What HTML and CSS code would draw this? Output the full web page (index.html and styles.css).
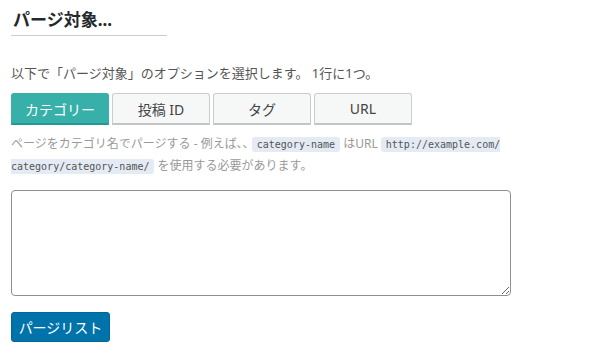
FILE: index.html
```html
<!DOCTYPE html>
<html lang="ja">
<head>
    <meta charset="UTF-8">
    <title>パージ対象</title>
    <link rel="stylesheet" href="styles.css">
</head>
<body>
    <div class="panel">
        <h2 class="title">パージ対象...</h2>

        <p class="intro">以下で「パージ対象」のオプションを選択します。 1行に1つ。</p>

        <!-- tabs -->
        <div class="tabs">
            <button class="tab active">カテゴリー</button>
            <button class="tab">投稿 ID</button>
            <button class="tab">タグ</button>
            <button class="tab">URL</button>
        </div>

        <p class="help">ページをカテゴリ名でパージする - 例えば､､ <code>category-name</code> はURL <code>http://example.com/<wbr>category/category-name/</code> を使用する必要があります。</p>

        <textarea class="list"></textarea>

        <button class="submit">パージリスト</button>
    </div>
</body>
</html>
```

FILE: styles.css
```css
body {
    margin: 0;
    font-family: "Noto Sans", "Noto Sans CJK JP", sans-serif;
    color: #333;
    background: #fff;
}
.panel {
    padding: 8px 11px;
    width: 500px;
}
.title {
    display: inline-block;
    margin: 0;
    padding: 0 12px 3px 2px;
    font-size: 17px;
    line-height: 24px;
    font-weight: bold;
    color: #23282d;
    border-bottom: 1px solid #ccc;
    width: 142px;
}
.intro {
    margin: 27px 0 10px;
    font-size: 13px;
    line-height: 20px;
    color: #555;
}
.tabs {
    display: flex;
    gap: 3px;
}
.tab {
    width: 98px;
    height: 32px;
    padding: 0;
    font-family: inherit;
    font-size: 14px;
    color: #444;
    background: #f6f7f7;
    border: 1px solid #ccc;
    border-bottom: 2px solid #c3c4c7;
    border-radius: 3px 3px 0 0;
}
.tab.active {
    background: #36b0a8;
    color: #fff;
    border-color: #36b0a8;
    border-bottom-color: #229a91;
}
.help {
    margin: 8px 0 13px;
    font-size: 12px;
    line-height: 21px;
    color: #999;
}
.help code {
    font-family: "DejaVu Sans Mono", monospace;
    font-size: 10px;
    color: #555;
    background: #e4ebf4;
    padding: 2px 5px;
    border-radius: 3px;
}
.list {
    display: block;
    box-sizing: border-box;
    width: 500px;
    height: 106px;
    margin: 0 0 16px;
    border: 1px solid #8c8f94;
    border-radius: 4px;
}
.submit {
    width: 99px;
    height: 30px;
    font-family: inherit;
    font-size: 14px;
    color: #fff;
    background: #0073aa;
    border: 1px solid #006799;
    border-radius: 3px;
}
```
